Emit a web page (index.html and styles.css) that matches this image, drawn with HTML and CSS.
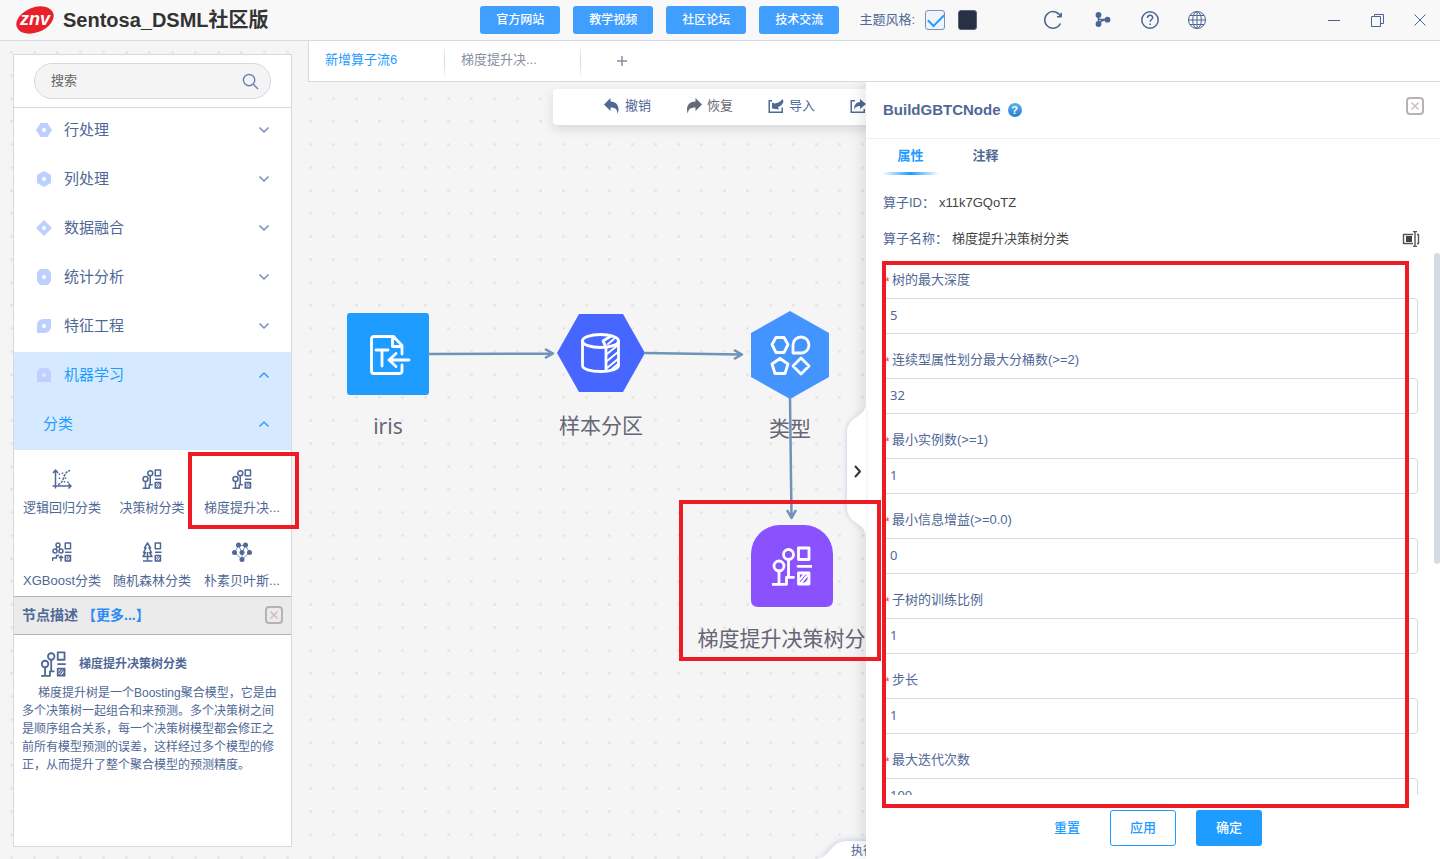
FILE: index.html
```html
<!DOCTYPE html>
<html lang="zh-CN">
<head>
<meta charset="utf-8">
<title>Sentosa_DSML社区版</title>
<link rel="stylesheet" href="styles.css">
</head>
<body>
<svg class="defs" aria-hidden="true">
  <defs>
    <symbol id="boxes" viewBox="0 0 40 40">
      <path d="M26.5 2h10.5v11.5h-10.5zM26.5 27h10.5v11h-10.5zM26 20.3h13"/>
      <path d="M28 33.500l5-6M28.500 37.500l8-9.500M33 38l4-4.500" stroke-width="2"/>
    </symbol>
    <symbol id="tree" viewBox="0 0 40 40">
      <circle cx="7" cy="20" r="5"/><circle cx="16.5" cy="8.500" r="5"/>
      <path d="M7 25v13M1 38.300h13.500v-7h7M16.500 14v17"/>
      <use href="#boxes" width="40" height="40"/>
    </symbol>
    <symbol id="xgb" viewBox="0 0 40 40">
      <circle cx="12" cy="6" r="4"/><circle cx="6" cy="18" r="4"/><circle cx="18" cy="18" r="4"/>
      <path d="M10 10l-2 4M14 10l2 4M1 38v-6h8v-5h5M18 39v-10M14 32l4-4 4 4"/>
      <use href="#boxes" width="40" height="40"/>
    </symbol>
    <symbol id="forest" viewBox="0 0 40 40">
      <path d="M11 2L5 12h3l-5 9h4l-5 8h18l-5-8h4l-5-9h3zM11 20v18M2 38h19"/>
      <use href="#boxes" width="40" height="40"/>
    </symbol>
    <symbol id="logit" viewBox="0 0 40 40">
      <path d="M7 39V3M2 8l5-6 5 6M1 34h37M33 29l5 5-5 5"/>
      <path d="M12 31c14-3 8-24 24-28" stroke-dasharray="5 2"/>
      <path d="M15 9v3M21 7v3M15 17v3M27 17v3M25 24v3M32 25v3"/>
    </symbol>
    <symbol id="bayes" viewBox="0 0 40 40">
      <path d="M13 7l7 14 7-14zM13 7L5 21l15 14 15-14L27 7M20 21v14" stroke-width="1.500"/>
      <g fill="currentColor" stroke="none"><circle cx="13" cy="6" r="5"/><circle cx="27" cy="6" r="5"/><circle cx="5" cy="21" r="5"/><circle cx="20" cy="21" r="5"/><circle cx="35" cy="21" r="5"/><circle cx="20" cy="35" r="5"/></g>
    </symbol>
    <symbol id="chevron" viewBox="0 0 12 12"><path d="M1.500 3.500L6 8l4.500-4.500"/></symbol>
    <symbol id="close" viewBox="0 0 18 18">
      <rect x="1" y="1" width="16" height="16" rx="3" stroke="#b4b4b4" stroke-width="2"/>
      <path d="M5.500 5.500l7 7M12.500 5.500l-7 7" stroke="#d3bcb8" stroke-width="1.500"/>
    </symbol>
  </defs>
</svg>

<header class="topbar">
  <div class="brand">
    <svg class="logo" viewBox="0 0 40 32" role="img" aria-label="znv">
      <ellipse cx="20" cy="16" rx="19.500" ry="12.500" transform="rotate(-22 20 16)" fill="#e8202a"/>
      <text x="20" y="21" text-anchor="middle" class="logo-text">znv</text>
    </svg>
    <h1 class="brand-name">Sentosa_DSML社区版</h1>
  </div>
  <nav class="links">
    <button class="link-btn">官方网站</button>
    <button class="link-btn">教学视频</button>
    <button class="link-btn">社区论坛</button>
    <button class="link-btn">技术交流</button>
  </nav>
  <div class="theme">
    <label for="light">主题风格:</label>
    <input id="light" class="theme-check" type="checkbox" checked>
    <button class="theme-dark" aria-label="深色"></button>
  </div>
  <div class="tools">
    <button class="icon-btn" aria-label="刷新"><svg class="line i20" viewBox="0 0 20 20"><path d="M17.800 7A8.300 8.300 0 1 0 17.500 13.500M14 6.800h4.200V2.800"/></svg></button>
    <button class="icon-btn" aria-label="流程"><svg class="line i20" viewBox="-4 0 20 20"><path d="M3.500 5v10M3.500 9.500h9M4 14c1-3 3-4 7-4.300"/><g fill="currentColor" stroke="none"><circle cx="3.500" cy="5" r="2.900"/><circle cx="3.500" cy="14" r="2.900"/><circle cx="12.500" cy="9.700" r="2.900"/></g></svg></button>
    <button class="icon-btn" aria-label="帮助"><svg class="line i20" viewBox="-1 0 20 20"><circle cx="10" cy="10" r="8.200"/><path d="M7.500 8c0-3.500 5.200-3.500 5.200-.5 0 2-2.600 2-2.600 4.300M10.100 13.500v1.500"/></svg></button>
    <button class="icon-btn" aria-label="语言"><svg class="line thin i20" viewBox="0 0 20 20"><circle cx="10" cy="10" r="8.500"/><ellipse cx="10" cy="10" rx="4.300" ry="8.500"/><path d="M10 1.500v17M1.500 10h17M3 5.500h14M3 14.500h14"/></svg></button>
  </div>
  <div class="window">
    <button class="icon-btn" aria-label="最小化"><svg class="line thin i16" viewBox="0 0 16 16"><path d="M2 8.500h12"/></svg></button>
    <button class="icon-btn" aria-label="还原"><svg class="line thin i16" viewBox="0 0 16 16"><path d="M2.500 4.500h9v10h-9zM5.500 4.500v-2h9v9h-3"/></svg></button>
    <button class="icon-btn" aria-label="关闭"><svg class="line thin i16" viewBox="0 0 16 16"><path d="M2.500 2.500l11 11M13.500 2.500l-11 11"/></svg></button>
  </div>
</header>

<div class="body">
  <aside class="sidebar">
    <div class="search">
      <div class="search-box">
        <input class="search-input" type="text" placeholder="搜索" aria-label="搜索">
        <svg class="search-icon" viewBox="0 0 18 18"><circle cx="7.500" cy="7.500" r="6"/><path d="M12 12l5 5"/></svg>
      </div>
    </div>
    <div class="menu">
      <button class="group"><svg class="shape" viewBox="0 0 16 16"><path fill-rule="evenodd" d="M4.500 1h7L16 8l-4.500 7h-7L0 8zM8 6a2 2 0 1 0 .01 0z"/></svg><span>行处理</span><svg class="chev"><use href="#chevron"/></svg></button>
      <button class="group"><svg class="shape" viewBox="0 0 16 16"><path fill-rule="evenodd" d="M8 0l7 4v8l-7 4-7-4V4zM8 6a2 2 0 1 0 .01 0z"/></svg><span>列处理</span><svg class="chev"><use href="#chevron"/></svg></button>
      <button class="group"><svg class="shape" viewBox="0 0 16 16"><path fill-rule="evenodd" d="M8 0l8 8-8 8-8-8zM8 6a2 2 0 1 0 .01 0z"/></svg><span>数据融合</span><svg class="chev"><use href="#chevron"/></svg></button>
      <button class="group"><svg class="shape" viewBox="0 0 16 16"><path fill-rule="evenodd" d="M4 0h8q3 3 3 5v6q0 2-3 5H4q-3-3-3-5V5q0-2 3-5zM8 6a2 2 0 1 0 .01 0z"/></svg><span>统计分析</span><svg class="chev"><use href="#chevron"/></svg></button>
      <button class="group"><svg class="shape" viewBox="0 0 16 16"><path fill-rule="evenodd" d="M7 1h8v8a6 6 0 0 1-6 6H1V7a6 6 0 0 1 6-6zM8 6a2 2 0 1 0 .01 0z"/></svg><span>特征工程</span><svg class="chev"><use href="#chevron"/></svg></button>
      <button class="group open"><svg class="shape" viewBox="0 0 16 16"><path fill-rule="evenodd" d="M6 1h4a5 5 0 0 1 5 5v8q0 1-1 1H2q-1 0-1-1V6a5 5 0 0 1 5-5zM8 6a2 2 0 1 0 .01 0z"/></svg><span>机器学习</span><svg class="chev"><use href="#chevron"/></svg></button>
      <button class="group open sub"><span>分类</span><svg class="chev"><use href="#chevron"/></svg></button>
    </div>
    <div class="tiles">
      <button class="tile"><svg class="glyph"><use href="#logit"/></svg><span>逻辑回归分类</span></button>
      <button class="tile"><svg class="glyph"><use href="#tree"/></svg><span>决策树分类</span></button>
      <button class="tile marked"><svg class="glyph"><use href="#tree"/></svg><span>梯度提升决...</span></button>
      <button class="tile"><svg class="glyph"><use href="#xgb"/></svg><span>XGBoost分类</span></button>
      <button class="tile"><svg class="glyph"><use href="#forest"/></svg><span>随机森林分类</span></button>
      <button class="tile"><svg class="glyph"><use href="#bayes"/></svg><span>朴素贝叶斯...</span></button>
    </div>
    <section class="desc">
      <div class="desc-head">
        <h2 class="desc-title">节点描述</h2>
        <a class="more" href="#more">【更多...】</a>
        <button class="icon-btn push" aria-label="关闭描述"><svg class="close"><use href="#close"/></svg></button>
      </div>
      <div class="desc-body">
        <div class="desc-node"><svg class="glyph big"><use href="#tree"/></svg><strong>梯度提升决策树分类</strong></div>
        <p class="desc-text">梯度提升树是一个Boosting聚合模型，它是由多个决策树一起组合和来预测。多个决策树之间是顺序组合关系，每一个决策树模型都会修正之前所有模型预测的误差，这样经过多个模型的修正，从而提升了整个聚合模型的预测精度。</p>
      </div>
    </section>
  </aside>

  <main class="main">
    <nav class="flows">
      <button class="flow current">新增算子流6</button>
      <button class="flow">梯度提升决...</button>
      <button class="flow-add" aria-label="新增"><svg class="plus" viewBox="0 0 12 12"><path d="M6 1v10M1 6h10"/></svg></button>
    </nav>
    <div class="stage">
      <div class="toolbar">
        <button class="tool"><svg class="solid" viewBox="0 0 16 16"><path d="M6.500 0v3.500c6 0 10 5 7 12.500 0-4.500-2-6.500-7-6.500V13L0 6.500z"/></svg>撤销</button>
        <button class="tool grey"><svg class="solid" viewBox="0 0 16 16"><path d="M9.500 0v3.500C3 3.500-1 8.500 2 16c0-4.500 2-6.500 7.500-6.500V13L16 6.500z"/></svg>恢复</button>
        <button class="tool"><svg class="solid" viewBox="0 0 16 16"><path d="M4 2H.5v13h14.500V9.500h-1.500v4H2v-10h2zM4 4.500l2.500 1C10 5 12 4 14.500 1l1 2.500c-1 3-3 5-5.500 5.500l1 2.500-7-1z"/></svg>导入</button>
        <button class="tool" aria-label="导出"><svg class="solid" viewBox="0 0 16 16"><path d="M5 2H.5v13h14.500v-4h-1.500v2.500H2v-10h3zM10 1l6 5-6 5V8c-3 0-5 1-6 4 0-5 2-8 6-8z"/></svg></button>
      </div>

      <div class="node n-iris">
        <svg class="node-shape" viewBox="0 0 82 82"><rect width="82" height="82" rx="3" fill="#1e9cff"/>
          <g class="pen" transform="translate(23 22)"><path d="M32 19V10.500L23.500 1.500H4Q1.500 1.500 1.500 4V36Q1.500 38.500 4 38.500H29Q32 38.500 32 36V30M22.500 2V11.500H32M6 15H18M12 15V31M39 25H20M26 18.500L19 25l7 6.500"/></g></svg>
        <span>iris</span>
      </div>
      <div class="node n-part">
        <svg class="node-shape wide" viewBox="0 0 88 82"><path d="M22 2h44l22 39-22 39H22L0 41z" fill="#4666ff"/>
          <g class="pen" transform="translate(24 21)"><ellipse cx="19.500" cy="8" rx="18" ry="6.500"/><path d="M1.500 8v24.500c0 3.500 8 6 18 6s18-2.500 18-6V8M25 14.500v23.500M25 14l-3-6 8-5"/><path d="M26 21l11-9M26 28l11-9M26 35l11-9M31 36l6-5M27 11l6-5" stroke-width="2"/></g></svg>
        <span>样本分区</span>
      </div>
      <div class="node n-type">
        <svg class="node-shape tall" viewBox="0 0 80 88"><path d="M40 0l39 22v44L40 88 1 66V22z" fill="#4494ff"/>
          <g class="pen" transform="translate(21 25)"><path d="M5 1.500h8l4 7-4 8H5l-4-8zM22 17V9a8 8 0 1 1 8 8zM9 22.500l8 5.500-3 9.500H4L1 28zM30 22l8 8-8 8-8-8z"/></g></svg>
        <span>类型</span>
      </div>
      <div class="node n-gbt">
        <svg class="node-shape" viewBox="0 0 82 82"><path d="M29 0h24a29 29 0 0 1 29 29v46q0 7-7 7H7q-7 0-7-7V29A29 29 0 0 1 29 0z" fill="#8a52ff"/>
          <svg class="pen" x="21" y="21" width="40" height="40"><use href="#tree"/></svg></svg>
        <span>梯度提升决策树分类</span>
      </div>
      <svg class="edges" aria-hidden="true">
        <path d="M120 272L244 271.500M237 267l8 4.500-8 4.500M337 271L433 272.500M426 268l8 4.500-8 4.500M482 316L483.500 435M479 428l4.500 8 4.500-8"/>
      </svg>

      <div class="run-tab">
        <svg class="run-shape" viewBox="0 0 90 18"><path d="M0 18C16 18 14 0 32 0h58v18z"/></svg>
        <span>执行信息</span>
      </div>
      <button class="handle" aria-label="收起">
        <svg viewBox="0 0 20 130"><path class="handle-bg" d="M20 0C18 13 1 11 1 28v74c0 17 17 15 19 28z"/><path class="handle-arrow" d="M9 61l5 5.500-5 5.500"/></svg>
      </button>

      <section class="panel">
        <div class="panel-head">
          <h2 class="panel-title">BuildGBTCNode</h2>
          <span class="help">?</span>
          <button class="icon-btn push" aria-label="关闭"><svg class="close"><use href="#close"/></svg></button>
        </div>
        <div class="tabs">
          <button class="tab on">属性</button>
          <button class="tab">注释</button>
        </div>
        <div class="meta"><span class="key">算子ID：</span><span>x11k7GQoTZ</span></div>
        <div class="meta name"><span class="key">算子名称：</span><span>梯度提升决策树分类</span>
          <button class="icon-btn push" aria-label="重命名"><svg class="rename" viewBox="0 0 18 16"><path d="M11 3.500H1.500v9H11M15 3.500h1.500v9H15M11 .5h4M11 15.500h4M13 .5v15"/><rect x="4" y="5" width="6" height="6" fill="#444" stroke="none"/></svg></button>
        </div>
        <div class="form-wrap">
          <form class="form">
            <div class="field"><label for="f1"><i>*</i>树的最大深度</label><input id="f1" type="text" value="5"></div>
            <div class="field"><label for="f2"><i>*</i>连续型属性划分最大分桶数(&gt;=2)</label><input id="f2" type="text" value="32"></div>
            <div class="field"><label for="f3"><i>*</i>最小实例数(&gt;=1)</label><input id="f3" type="text" value="1"></div>
            <div class="field"><label for="f4"><i>*</i>最小信息增益(&gt;=0.0)</label><input id="f4" type="text" value="0"></div>
            <div class="field"><label for="f5"><i>*</i>子树的训练比例</label><input id="f5" type="text" value="1"></div>
            <div class="field"><label for="f6"><i>*</i>步长</label><input id="f6" type="text" value="1"></div>
            <div class="field"><label for="f7"><i>*</i>最大迭代次数</label><input id="f7" type="text" value="100"></div>
          </form>
          <div class="thumb"></div>
          <div class="mark form-mark"></div>
        </div>
        <div class="actions">
          <button class="act plain">重置</button>
          <button class="act outline">应用</button>
          <button class="act fill">确定</button>
        </div>
      </section>
      <div class="mark node-mark"></div>
    </div>
  </main>
</div>
</body>
</html>
```
FILE: styles.css
```css
* { box-sizing: border-box; }
body {
  margin: 0;
  height: 100vh;
  display: flex;
  flex-direction: column;
  overflow: hidden;
  font: 13px/20px "Liberation Sans", "Noto Sans CJK SC", sans-serif;
  color: #4f6896;
  background: #f5f5f5 radial-gradient(circle, #e6e6e8 1px, transparent 2px) 0 -5px / 23px 23px;
}
button, input { font: inherit; color: inherit; }
button { border: 0; padding: 0; background: none; cursor: pointer; }
h1, h2, p { margin: 0; }
svg { display: block; fill: none; stroke-linejoin: round; }
.defs { position: absolute; width: 0; height: 0; }
.icon-btn { display: flex; color: #4a6595; }
.push { margin-left: auto; }
.close { width: 18px; height: 18px; }

/* top bar */
.topbar {
  display: flex;
  align-items: center;
  height: 41px;
  flex: none;
  padding: 0 12px 0 15px;
  background: #f8f8f8;
  border-bottom: 1px solid #d5d9e4;
}
.brand { display: flex; align-items: center; gap: 8px; margin-right: auto; }
.logo { width: 40px; height: 32px; }
.logo-text { font: italic bold 18px "Liberation Sans", sans-serif; fill: #fff; }
.brand-name { font-size: 20px; line-height: 28px; color: #333; }
.links { display: flex; gap: 13px; }
.link-btn {
  width: 80px;
  height: 28px;
  font-size: 12px;
  font-weight: 500;
  color: #fff;
  background: #409eff;
  border-radius: 3px;
}
.theme { display: flex; align-items: center; margin-left: 20px; }
.theme-check {
  appearance: none;
  width: 20px;
  height: 20px;
  margin: 0 13px 0 10px;
  border: 1px solid #7e8fb0;
  border-radius: 3px;
  background: #eff3fb;
}
.theme-check::before {
  content: "";
  display: block;
  width: 14px;
  height: 7px;
  margin: 3px 2px;
  border: solid #1e9cff;
  border-width: 0 0 2px 2px;
  transform: rotate(-45deg);
}
.theme-dark { width: 19px; height: 20px; border: 1px solid #56627c; border-radius: 3px; background: #283044; }
.line { stroke: currentColor; stroke-width: 1.5; }
.thin { stroke-width: 1; }
.i20 { width: 20px; height: 20px; }
.i16 { width: 16px; height: 16px; }
.tools { display: flex; gap: 28px; margin-left: 66px; }
.window { display: flex; gap: 27px; margin-left: 119px; }

.body { flex: 1; min-height: 0; display: flex; }

/* sidebar */
.sidebar {
  width: 279px;
  flex: none;
  margin: 13px 16px 12px 13px;
  display: flex;
  flex-direction: column;
  background: #fff;
  border: 1px solid #d5d9e4;
}
.search { padding: 8px 20px; border-bottom: 1px solid #d5d9e4; }
.search-box {
  display: flex;
  align-items: center;
  height: 36px;
  padding: 0 11px 0 16px;
  border: 1px solid #d5d9e4;
  border-radius: 18px;
  background: #f4f4f4;
}
.search-input { flex: 1; min-width: 0; padding: 0; border: 0; background: none; outline: 0; }
.search-input::placeholder { color: #666; opacity: 1; }
.search-icon { width: 17px; height: 17px; stroke: #6b80b4; stroke-width: 1.5; }
.menu { margin-top: -1px; }
.group {
  display: flex;
  align-items: center;
  width: 100%;
  height: 49px;
  padding: 0 21px 4px 22px;
  font-size: 15px;
  text-align: left;
}
.group span { flex: 1; }
.shape { width: 16px; height: 16px; margin-right: 12px; fill: #bdcfff; }
.chev { width: 12px; height: 12px; stroke: #7a8bb8; stroke-width: 1.5; }
.open { background: #d6eaff; color: #1e9cff; }
.open .chev { stroke: #3d9bf5; transform: rotate(180deg); }
.open .shape { fill: #bfcfff; }
.sub { padding-left: 29px; }
.tiles { display: grid; grid-template-columns: repeat(3, 90px); padding: 0 3px; }
.tile {
  position: relative;
  display: flex;
  flex-direction: column;
  align-items: center;
  gap: 9px;
  height: 73px;
  padding-top: 19px;
  white-space: nowrap;
}
.glyph { width: 20px; height: 20px; stroke: #4f6896; stroke-width: 3; color: #4f6896; }
.marked::after { content: ""; position: absolute; inset: 2px -12px -6px -9px; border: 4px solid #ed1c24; z-index: 3; }
.desc { flex: 1; }
.desc-head {
  display: flex;
  align-items: center;
  height: 39px;
  padding: 0 8px 2px;
  background: #ebebeb;
  border: solid #b3b3ae;
  border-width: 1px 0;
}
.desc-title { font-size: 14px; }
.more { margin-left: 4px; font-size: 14px; font-weight: 700; color: #2b8bf5; text-decoration: none; }
.desc-body { padding: 16px 8px; font-size: 12px; line-height: 18px; }
.desc-node { display: flex; align-items: center; gap: 12px; padding-left: 18px; }
.desc-node .big { width: 27px; height: 26px; stroke-width: 2.8; }
.desc-text { margin-top: 7px; text-indent: 16px; }

/* canvas */
.main { flex: 1; min-width: 0; display: flex; flex-direction: column; }
.flows {
  display: flex;
  height: 41px;
  flex: none;
  background: #fff;
  border: solid #d5d9e4;
  border-width: 0 0 1px 1px;
}
.flow {
  width: 136px;
  padding: 0 16px 2px;
  text-align: left;
  color: #8a8f9f;
  border-right: 1px solid;
  border-image: linear-gradient(#fff 10%, #cfd5e8 50%, #fff 95%) 1;
}
.current { color: #1e9cff; }
.flow-add { display: flex; align-items: center; margin-left: 35px; }
.plus { width: 12px; height: 12px; stroke: #8a8f9f; stroke-width: 1.5; }
.stage { position: relative; flex: 1; min-height: 0; overflow: hidden; }
.toolbar {
  display: flex;
  gap: 35px;
  height: 36px;
  margin: 7px 0 0 245px;
  padding: 0 0 2px 51px;
  background: #fff;
  border-radius: 4px;
  box-shadow: 0 4px 12px rgba(0, 0, 0, .12);
}
.tool { display: flex; align-items: center; gap: 5px; white-space: nowrap; }
.grey { color: #666a78; }
.solid { width: 16px; height: 16px; fill: currentColor; }

.node {
  position: absolute;
  display: flex;
  flex-direction: column;
  align-items: center;
  gap: 17px;
  width: 200px;
  font: 21px/28px "Noto Sans", "Noto Sans CJK SC", sans-serif;
  color: #666674;
  white-space: nowrap;
}
.node-shape { width: 82px; height: 82px; }
.wide { width: 88px; }
.tall { width: 80px; height: 88px; }
.pen { stroke: #fff; stroke-width: 2.8; stroke-linecap: round; color: #fff; }
.n-iris { left: -20px; top: 231px; }
.n-part { left: 193px; top: 230px; }
.n-type { left: 382px; top: 229px; gap: 15px; }
.n-gbt { left: 384px; top: 443px; }
.edges { position: absolute; inset: 0; width: 100%; height: 100%; stroke: #6f93b9; stroke-width: 2.5; pointer-events: none; }

.run-tab { position: absolute; left: 507px; bottom: 0; width: 90px; height: 18px; }
.run-tab span { position: absolute; left: 36px; top: 0; font-size: 12px; }
.run-shape { width: 90px; height: 18px; fill: #fff; filter: drop-shadow(0 0 3px #b9c2dd); }
.handle { position: absolute; right: 574px; top: 323px; width: 20px; height: 130px; filter: drop-shadow(-1px 0 2px #cdd3e2); }
.handle svg { width: 20px; height: 130px; }
.handle-bg { fill: #fff; }
.handle-arrow { stroke: #333; stroke-width: 2; }

/* properties panel */
.panel {
  position: absolute;
  right: 0;
  top: 0;
  bottom: 0;
  width: 574px;
  display: flex;
  flex-direction: column;
  background: #fff;
  box-shadow: -4px 0 14px rgba(0, 0, 0, .1);
  clip-path: inset(0 0 0 -20px);
}
/* the handle joins the panel edge, above its shadow */
.handle { z-index: 1; }
.panel-head {
  display: flex;
  align-items: center;
  height: 57px;
  flex: none;
  padding: 0 16px 0 17px;
  border-bottom: 1px solid #ebeef5;
}
.panel-title { font-size: 15px; }
.panel-head .push { margin-bottom: 8px; }
.help {
  width: 14px;
  height: 14px;
  margin-left: 7px;
  border-radius: 7px;
  background: linear-gradient(#5ab1ea, #2482cc);
  color: #fff;
  font: bold 11px/14px "Liberation Sans", sans-serif;
  text-align: center;
}
.tabs { display: flex; gap: 18px; padding: 0 16px; }
.tab { width: 57px; height: 36px; padding-bottom: 2px; font-weight: 700; }
.on { color: #1e9cff; background: linear-gradient(90deg, #fff, #1e9cff, #fff) bottom / 100% 3px no-repeat; }
.meta { display: flex; align-items: center; height: 36px; margin: 10px 16px 0 17px; color: #444; }
.meta .key { color: #4f6896; margin-right: 4px; }
.name { margin-top: 0; }
.name .push { margin-right: 4px; }
.rename { width: 18px; height: 16px; stroke: #555; stroke-width: 1.4; }
.form-wrap { position: relative; flex: 1; min-height: 0; margin: -4px 0 0; }
.form { height: 100%; overflow: hidden; padding: 15px 22px 0 17px; }
.field { height: 80px; }
.field label { display: flex; align-items: center; height: 30px; padding-bottom: 6px; }
.field i { width: 9px; padding: 5px 0 0 2px; font-size: 12px; line-height: 15px; font-style: normal; color: #ff3b30; }
.field input {
  display: block;
  width: 100%;
  height: 36px;
  padding: 0 6px 2px;
  border: 1px solid #d5d9e4;
  border-radius: 4px;
  background: #fff;
  font: 13px "Noto Sans", sans-serif;
}
.thumb { position: absolute; right: 0; top: 0; width: 6px; height: 311px; border-radius: 3px; background: #d5dae5; }
.mark { position: absolute; border: 4px solid #ed1c24; pointer-events: none; z-index: 2; }
.form-mark { inset: 8px 31px -13px 16px; }
.node-mark { left: 371px; top: 418px; width: 202px; height: 161px; }
.actions { display: flex; justify-content: center; align-items: center; gap: 20px; flex: none; padding: 15px 0 13px; }
.act { height: 36px; width: 66px; border-radius: 3px; font-weight: 500; color: #1e9cff; }
.plain { width: 46px; }
.outline { border: 1px solid #1e9cff; }
.fill { background: #1e9cff; color: #fff; }
```
